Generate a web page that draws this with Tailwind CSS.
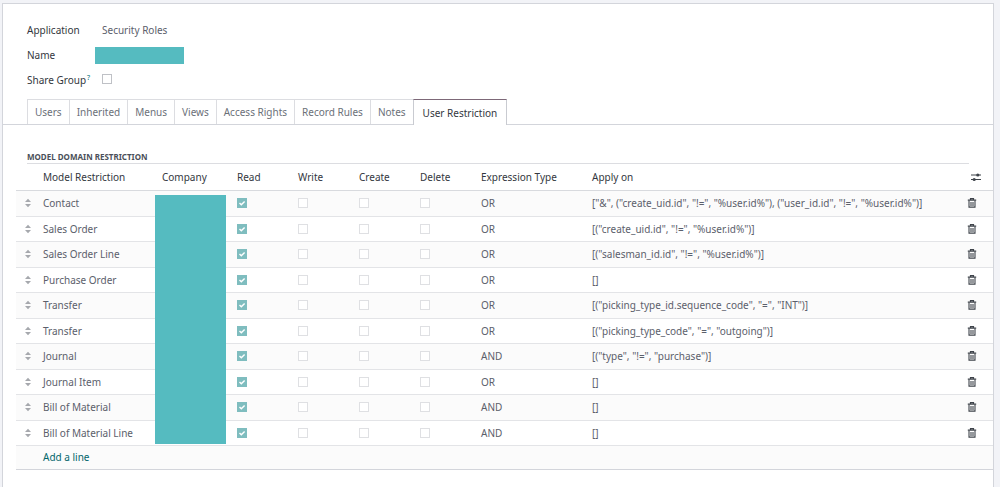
<!DOCTYPE html>
<html lang="en">
<head>
<meta charset="utf-8">
<title>Security Roles</title>
<script src="https://cdn.jsdelivr.net/npm/@tailwindcss/browser@4"></script>
</head>
<body class="min-h-screen overflow-hidden bg-[#f2f3f7] pt-[3px] pr-[6px] pl-[2px] font-['Noto_Sans',sans-serif] text-[10px] leading-4 text-[#5b606b]">
<svg class="hidden">
  <symbol id="handle" viewBox="0 0 8 10"><path d="M4 .8 7 4H1zM4 9.2 1 6h6z" fill="#a6a8ad"/></symbol>
  <symbol id="trash" viewBox="0 0 10 10"><path d="M3.5 1.8V.7h3v1.1M.8 2.2h8.4" fill="none" stroke="#3f444b" stroke-width="1.2"/><path d="M2 2.5v6.6h6V2.5M4 4v4M6 4v4" fill="none" stroke="#3f444b" stroke-width="1.1"/></symbol>
</svg>
<main class="min-h-[calc(100vh-3px)] border-x border-t border-[#d3d5db] bg-white">
  <form>
    <div class="grid grid-cols-[68px_1fr] items-start pt-[18px] pl-6 text-[#33373e]">
      <span class="h-[17px]">Application</span>
      <span class="pl-[7px] text-[#5b606b]">Security Roles</span>
      <label for="name" class="mt-2">Name</label>
      <input id="name" class="mt-2 h-[17px] w-[89px] bg-[#55bbc0]">
      <label for="share" class="mt-2 h-4 whitespace-nowrap">Share Group<sup class="-top-1 ml-px text-[7px] text-[#01747a]">?</sup></label>
      <input id="share" type="checkbox" class="mt-[10px] ml-[7px] size-[10px] appearance-none border border-[#bfc1c6]">
    </div>
    <div role="tablist" class="mt-[11px] flex border-b border-[#d3d5db] pl-6 text-[#6b7079]">
      <button type="button" role="tab" class="h-[25px] border-t border-l border-[#dcdde1] px-[7px]">Users</button>
      <button type="button" role="tab" class="h-[25px] border-t border-l border-[#dcdde1] px-[7px]">Inherited</button>
      <button type="button" role="tab" class="h-[25px] border-t border-l border-[#dcdde1] px-[7px]">Menus</button>
      <button type="button" role="tab" class="h-[25px] border-t border-l border-[#dcdde1] px-[7px]">Views</button>
      <button type="button" role="tab" class="h-[25px] border-t border-l border-[#dcdde1] px-[7px]">Access Rights</button>
      <button type="button" role="tab" class="h-[25px] border-t border-l border-[#dcdde1] px-[7px]">Record Rules</button>
      <button type="button" role="tab" class="h-[25px] border-t border-l border-[#dcdde1] px-[7px]">Notes</button>
      <button type="button" role="tab" aria-selected="true" class="-mb-px h-[26px] border-x border-t border-x-[#c9cbd1] border-t-[#7d6878] bg-white px-[9px] text-[#33373e]">User Restriction</button>
    </div>
    <h2 class="mt-6 mr-6 ml-6 h-[15px] border-b border-[#dcdde1] text-[8px] font-bold text-[#4a4f59]">MODEL DOMAIN RESTRICTION</h2>
    <table class="ml-[13px] w-[calc(100%-13px)] table-fixed border-collapse text-left">
      <colgroup>
        <col class="w-[19px]"><col class="w-[119px]"><col class="w-[75px]"><col class="w-[61px]"><col class="w-[61px]"><col class="w-[61px]"><col class="w-[61px]"><col class="w-[111px]"><col><col class="w-[34px]">
      </colgroup>
      <thead>
        <tr class="h-[26px] border-b border-[#d8dade] text-[#33373e] *:px-2 *:font-normal">
          <th></th><th>Model Restriction</th><th>Company</th><th>Read</th><th>Write</th><th>Create</th><th>Delete</th><th>Expression Type</th><th>Apply on</th>
          <th><button type="button" aria-label="Optional columns" class="ml-1 block"><svg class="h-[10px] w-[10px]" viewBox="0 0 10 10"><path d="M0 3h10M0 7.5h10" stroke="#3f444b"/><circle cx="6.8" cy="3" r="1.6" fill="#3f444b"/><circle cx="3.2" cy="7.5" r="1.6" fill="#3f444b"/></svg></button></th>
        </tr>
      </thead>
      <tbody id="rows"></tbody>
      <tfoot>
        <tr class="h-6 border-b border-[#d3d5db] bg-[#fbfbfb]"><td></td><td colspan="9" class="px-2"><a href="#" class="text-[#01666b]">Add a line</a></td></tr>
      </tfoot>
    </table>
  </form>
</main>
<script>
  const rows = [
    ['Contact', 'OR', '["&amp;", ("create_uid.id", "!=", "%user.id%"), ("user_id.id", "!=", "%user.id%")]'],
    ['Sales Order', 'OR', '[("create_uid.id", "!=", "%user.id%")]'],
    ['Sales Order Line', 'OR', '[("salesman_id.id", "!=", "%user.id%")]'],
    ['Purchase Order', 'OR', '[]'],
    ['Transfer', 'OR', '[("picking_type_id.sequence_code", "=", "INT")]'],
    ['Transfer', 'OR', '[("picking_type_code", "=", "outgoing")]'],
    ['Journal', 'AND', '[("type", "!=", "purchase")]'],
    ['Journal Item', 'OR', '[]'],
    ['Bill of Material', 'AND', '[]'],
    ['Bill of Material Line', 'AND', '[]'],
  ];
  const empty = (name, right) => `<td class="px-2"><input type="checkbox" disabled aria-label="${right} ${name}" class="block size-[10px] appearance-none border border-[#dfe0e3] bg-white"></td>`;
  document.getElementById('rows').innerHTML = rows.map(([name, type, rule], i) => `
    <tr class="h-[25px] border-b border-[#e3e4e7] odd:h-[26px] odd:bg-[#fbfbfb]">
      <td><svg class="ml-2 h-[10px] w-2"><use href="#handle"/></svg></td>
      <td class="px-2">${name}</td>
      <td class="relative">${i ? '' : '<div class="absolute top-1 left-px h-[249px] w-[71px] bg-[#55bbc0]"></div>'}</td>
      <td class="px-2"><span class="relative block size-[10px]"><input type="checkbox" checked disabled aria-label="Read ${name}" class="block size-[10px] appearance-none bg-[#7fbdbf]"><svg class="absolute inset-0 size-[10px]" viewBox="0 0 10 10"><path d="m2.5 5 1.8 1.8L7.6 3.4" fill="none" stroke="#fff" stroke-width="1.4"/></svg></span></td>
      ${empty(name, 'Write')}${empty(name, 'Create')}${empty(name, 'Delete')}
      <td class="px-2">${type}</td>
      <td class="px-2 whitespace-nowrap">${rule}</td>
      <td class="px-2"><button type="button" aria-label="Delete row ${name}" class="block"><svg class="size-[10px]"><use href="#trash"/></svg></button></td>
    </tr>`).join('');
</script>
</body>
</html>
